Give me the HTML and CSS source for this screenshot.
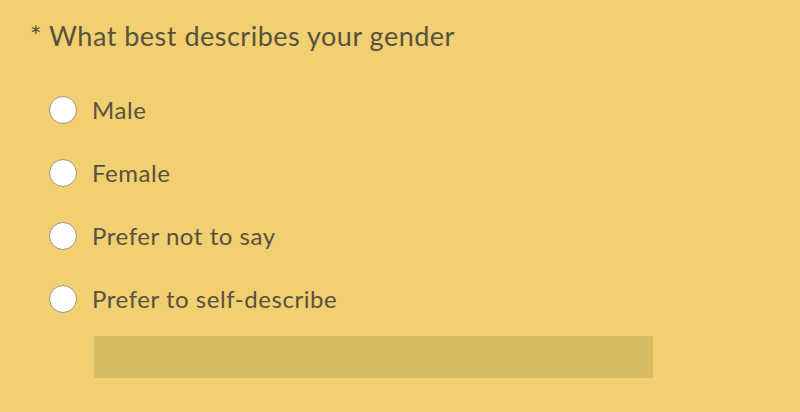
FILE: index.html
```html
<!doctype html>
<html>
  <head>
    <title>Gender question</title>
    <link rel="stylesheet" href="styles.css">
  </head>
  <body>
    <form class="question">
      <div class="q-title">* What best describes your gender</div>
      <ul class="choices">
        <li><label><input type="radio" name="gender"><span>Male</span></label></li>
        <li><label><input type="radio" name="gender"><span>Female</span></label></li>
        <li><label><input type="radio" name="gender"><span>Prefer not to say</span></label></li>
        <li><label><input type="radio" name="gender"><span>Prefer to self-describe</span></label></li>
      </ul>
      <input class="other" type="text" autocomplete="off">
    </form>
  </body>
</html>
```

FILE: styles.css
```css
body { margin: 0; background: #f2cf70; font-family: Lato, sans-serif; color: #57523f; }

.question { padding: 18px 0 0 30px; }
.q-title { font-size: 27px; line-height: 36px; letter-spacing: 0.5px; }

.choices { list-style-type: none; margin: 0; padding: 0 0 0 19px; }
.choices li { height: 63px; display: flex; align-items: center; }
.choices li:first-child { margin-top: 24px; }
.choices label { display: flex; align-items: center; gap: 15px; font-size: 24px; letter-spacing: 0.55px; }
.choices input { appearance: none; margin: 0; width: 28px; height: 28px; border-radius: 50%; background: #fff; border: 1.5px solid #9d9477; box-sizing: border-box; }

.other { display: block; margin: 6px 0 0 64px; width: 559px; height: 42px; border: none; background: #d8bc64; padding: 0 10px; box-sizing: border-box; outline: none; }
```
